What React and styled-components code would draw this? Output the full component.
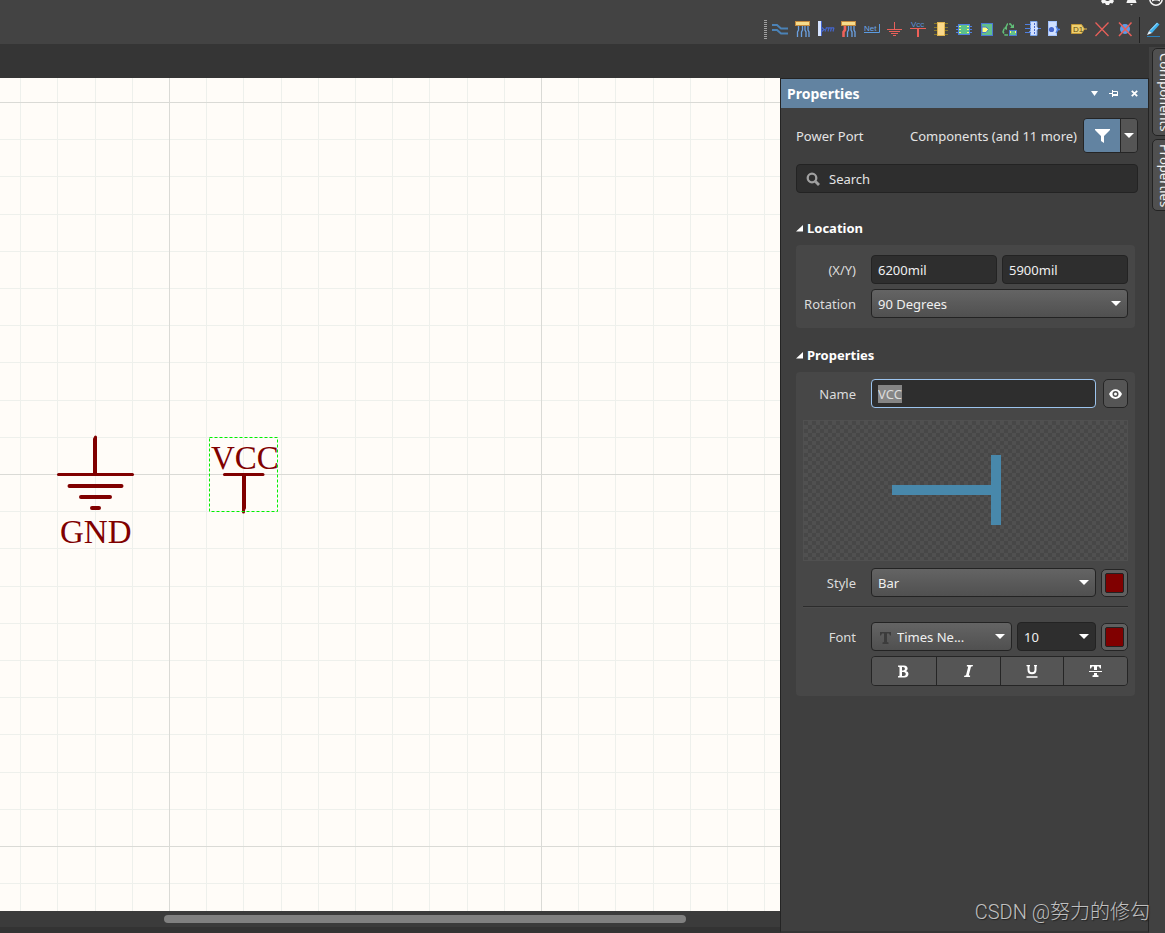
import React, { useEffect, useRef } from "react";
import styled, { createGlobalStyle, css } from "styled-components";

const GlobalStyle = createGlobalStyle`
  *, *::before, *::after { box-sizing: border-box; }
  html, body { margin: 0; padding: 0; background: #353535; }
  body, button, input, select {
    font-family: "Noto Sans", "Open Sans", sans-serif;
    font-size: 13px;
    color: #f0f0f0;
  }
  svg { display: block; flex: none; }
`;

/* ---------- application frame ---------- */

const Frame = styled.div`
  position: relative;
  display: flex;
  flex-direction: column;
  min-height: 100vh;
  overflow: hidden;
`;

const TopBar = styled.header`
  height: 44px;
  background: #434343;
`;

const SystemIcons = styled.div`
  display: flex;
  justify-content: flex-end;
  align-items: flex-end;
  gap: 11px;
  height: 6px;
  padding-right: 2px;
  overflow: hidden;
`;

const SystemButton = styled.button`
  display: block;
  padding: 0;
  border: 0;
  background: none;
`;

const Toolbar = styled.div`
  display: flex;
  justify-content: flex-end;
  align-items: center;
  height: 27px;
  margin-top: 10px;
`;

const Grip = styled.span`
  width: 3px;
  height: 20px;
  margin-right: 2px;
  background: repeating-linear-gradient(#a0a0a0 0 1px, transparent 1px 2px);
`;

const ToolButton = styled.button`
  display: flex;
  justify-content: center;
  width: 23px;
  padding: 5px 0;
  border: 0;
  background: none;
`;

const ToolDivider = styled.span`
  width: 1px;
  height: 26px;
  margin: 0 2px;
  background: #222;
`;

const Body = styled.div`
  display: flex;
  flex: 1;
`;

const Main = styled.main`
  display: flex;
  flex-direction: column;
  flex: 1;
  min-width: 0;
`;

const DocumentStrip = styled.div`
  height: 34px;
  background: #353535;
`;

const Workspace = styled.div`
  display: flex;
  flex: 1;
`;

const Editor = styled.section`
  display: flex;
  flex-direction: column;
  flex: 1;
  min-width: 0;
`;

const Sheet = styled.div`
  position: relative;
  flex: 1;
  background: #fffcf8;
  overflow: hidden;
`;

const SheetDrawing = styled.svg`
  position: absolute;
  left: 0;
  top: 0;
  width: 100%;
  height: 100%;
`;

const ScrollTrack = styled.div`
  height: 16px;
  padding: 4px 0;
  background: #3b3b3b;
`;

const ScrollThumb = styled.div`
  width: 67%;
  height: 8px;
  margin-left: 21%;
  border-radius: 4px;
  background: #808080;
`;

const StatusStrip = styled.div`
  height: 6px;
  background: #333;
`;

/* ---------- properties panel ---------- */

const Panel = styled.aside`
  width: 369px;
  border: 1px solid #242424;
  border-bottom: 2px solid #353535;
  background: #3f3f3f;
`;

const PanelHeader = styled.div`
  display: flex;
  align-items: center;
  height: 29px;
  padding: 0 8px 0 6px;
  background: #6283a1;
`;

const PanelTitle = styled.h1`
  flex: 1;
  margin: 0;
  font-size: 14px;
  line-height: 20px;
  font-weight: 700;
  color: #fff;
`;

const HeaderButton = styled.button`
  display: flex;
  justify-content: center;
  align-items: center;
  width: 20px;
  height: 20px;
  padding: 0;
  border: 0;
  background: none;
  &:last-child { width: 12px; margin-left: 4px; }
`;

const PanelBody = styled.div`
  padding: 10px 10px 0 15px;
`;

const FilterRow = styled.div`
  display: flex;
  align-items: center;
  line-height: 20px;
`;

const ObjectKind = styled.span`
  flex: 1;
  color: #e4e4e4;
`;

const FilterScope = styled.span`
  margin-right: 6px;
  color: #e4e4e4;
`;

const SplitButton = styled.div`
  display: flex;
  height: 35px;
  border: 1px solid #252525;
  border-radius: 4px;
  overflow: hidden;
`;

const SplitPart = styled.button`
  display: flex;
  justify-content: center;
  align-items: center;
  width: ${(p) => (p.$main ? "36px" : "17px")};
  padding: 0;
  border: 0;
  background: ${(p) => (p.$main ? "#6283a1" : "#555")};
  ${(p) => !p.$main && css`border-left: 1px solid #252525;`}
`;

const SearchBox = styled.label`
  display: flex;
  align-items: center;
  gap: 8px;
  height: 29px;
  margin-top: 11px;
  padding: 0 9px;
  border: 1px solid #232323;
  border-radius: 4px;
  background: #2e2e2e;
`;

const SearchInput = styled.input`
  flex: 1;
  min-width: 0;
  padding: 0;
  border: 0;
  outline: 0;
  background: none;
  line-height: 20px;
  &::placeholder { color: #e4e4e4; opacity: 1; }
`;

const SectionTitle = styled.h2`
  display: flex;
  align-items: center;
  gap: 4px;
  height: 20px;
  margin: ${(p) => (p.$first ? "25px" : "17px")} 0 7px;
  font-size: 13px;
  line-height: 20px;
  font-weight: 700;
  color: #fff;
`;

const Group = styled.div`
  display: flex;
  flex-direction: column;
  gap: 5px;
  margin-right: 3px;
  padding: ${(p) => (p.$tight ? "7px" : "10px")} 7px 10px;
  border-radius: 4px;
  background: #474747;
`;

const Field = styled.div`
  display: grid;
  grid-template-columns: 53px 1fr;
  column-gap: 15px;
  align-items: center;
`;

const FieldLabel = styled.label`
  text-align: right;
  line-height: 20px;
  color: #dcdcdc;
`;

const Controls = styled.div`
  display: flex;
  align-items: center;
  gap: ${(p) => (p.$wide ? "7px" : "5px")};
  min-width: 0;
`;

const TextInput = styled.input`
  flex: 1;
  min-width: 0;
  height: 29px;
  padding: 0 6px;
  border: 1px solid ${(p) => (p.$active ? "#9cc4ee" : "#232323")};
  border-radius: 4px;
  outline: 0;
  background: #2e2e2e;
  &::selection { background: #858585; color: #dcdcdc; }
`;

const SelectBox = styled.div`
  position: relative;
  display: flex;
  flex: ${(p) => (p.$narrow ? "0 0 79px" : "1")};
  min-width: 0;
`;

const Select = styled.select`
  appearance: none;
  width: 100%;
  height: 29px;
  padding: 0 24px 0 ${(p) => (p.$icon ? "25px" : "6px")};
  border: 1px solid #232323;
  border-radius: 4px;
  outline: 0;
  background: ${(p) => (p.$dark ? "#2e2e2e" : "linear-gradient(#646464, #505050)")};
`;

const SelectArrow = styled.span`
  position: absolute;
  right: 7px;
  top: 12px;
  pointer-events: none;
`;

const SelectIcon = styled.span`
  position: absolute;
  left: 9px;
  top: 10px;
  pointer-events: none;
`;

const IconButton = styled.button`
  display: flex;
  justify-content: center;
  align-items: center;
  width: 25px;
  height: 29px;
  padding: 0;
  border: 1px solid #252525;
  border-radius: 5px;
  background: #555;
`;

const Swatch = styled.button`
  width: 27px;
  height: 28px;
  padding: 3px;
  border: 1px solid #252525;
  border-radius: 5px;
  background: #606060;
  &::before {
    content: "";
    display: block;
    height: 100%;
    border: 1px solid #222;
    border-radius: 2px;
    background: #800000;
  }
`;

const Preview = styled.div`
  height: 141px;
  margin: 7px 0 2px;
  padding: 34px 0 0 88px;
  border: 1px solid #505050;
  background: repeating-conic-gradient(#505050 0 25%, #474747 0 50%) 0 0 / 8px 8px;
`;

const Rule = styled.hr`
  width: 100%;
  height: 2px;
  margin: 4px 0 9px;
  border: 0;
  border-top: 1px solid #2c2c2c;
  border-bottom: 1px solid #4c4c4c;
`;

const StyleButtons = styled.div`
  display: grid;
  grid-template-columns: repeat(4, 1fr);
  height: 30px;
  margin-left: 68px;
  border: 1px solid #252525;
  border-radius: 4px;
  overflow: hidden;
`;

const StyleButton = styled.button`
  display: flex;
  justify-content: center;
  align-items: center;
  padding: 0;
  border: 0;
  background: #555;
  & + & { border-left: 1px solid #252525; }
`;

/* ---------- right rail ---------- */

const Rail = styled.nav`
  display: flex;
  flex-direction: column;
  gap: 3px;
  width: 16px;
  margin-top: 3px;
  padding: 1px 0 0 3px;
  background: #414141;
  overflow: hidden;
`;

const RailTab = styled.button`
  width: 26px;
  height: ${(p) => p.$length};
  padding: 4px 0 0;
  border: 1px solid #232323;
  border-radius: 5px;
  background: #505050;
  text-align: left;
  line-height: 20px;
  writing-mode: vertical-rl;
  white-space: nowrap;
  overflow: hidden;
`;

const Watermark = styled.div`
  position: absolute;
  right: 15px;
  bottom: 6px;
  font-family: Roboto, "Noto Sans CJK SC", sans-serif;
  font-size: 20px;
  font-weight: 300;
  line-height: 30px;
  color: #c0c0c0;
  text-shadow: 1px 1px 1px #222;
`;

/* ---------- drawings ---------- */

const Caret = ({ w = 10, h = 5 }) => (
  <svg width={w} height={h} viewBox="0 0 10 5" preserveAspectRatio="none"><path d="M0 0H10L5 5Z" fill="#fff" /></svg>
);

const Collapse = () => (
  <svg width="7" height="7" viewBox="0 0 7 7"><path d="M7 0V6.500H0Z" fill="#fff" /></svg>
);

const harnessWires = "M3.500 5V9L2.500 11V16M7.500 5V9L6.500 11V16M10 5V9L11 11V16M13 5V9L14 11V16";

const toolIcons = [
  ["Wire", <g fill="none" stroke="#4b82b6" strokeWidth="2"><path d="M0 4H5L9 7.500H16" /><path d="M0 9H5L9 12.500H16" /></g>],
  ["Bus", <g><path d={harnessWires} fill="none" stroke="#6ba0e0" strokeWidth="1.300" /><rect x=".5" y=".5" width="14" height="4" fill="#f6dc8c" stroke="#c48a3c" /></g>],
  ["Signal harness", <g><rect x="0" y="0" width="3" height="15" fill="#d6e4ff" /><path d="M3.500 0V15" stroke="#4566cc" /><path d="M4 6.500L6 8.500H7M4 10.500L6 8.500M7 10.500L8.500 6.500M10 10.500L11 6.500M12.500 10.500L13.500 6.500M15 10.500L16 6.500M8 6.800H16" fill="none" stroke="#4566cc" strokeWidth="1.200" /></g>],
  ["Harness connector", <g><path d={harnessWires} fill="none" stroke="#6ba0e0" strokeWidth="1.300" /><path d="M4 5V9L2.500 11V16" fill="none" stroke="#f06058" strokeWidth="2.500" /><rect x=".5" y=".5" width="14" height="4" fill="#f6dc8c" stroke="#c48a3c" /></g>],
  ["Net label", <g><text x="0" y="10" fontFamily="Liberation Sans" fontSize="8" fill="#6ba8ea">Net</text><path d="M0 11.500H15.500V3" fill="none" stroke="#5b9be0" /></g>],
  ["Ground port", <path d="M7.500 1V8M0 8.500H15M2 10.500H13M4 12.500H11M6 14.500H9" stroke="#e8605a" fill="none" />],
  ["Power port", <g><text x="1" y="6" fontFamily="Liberation Sans" fontSize="8" fill="#5b92d8">Vcc</text><path d="M0 7.500H16" stroke="#f06058" /><path d="M8 8V16" stroke="#f06058" strokeWidth="2" /></g>],
  ["Part", <g><path d="M1 2.500H15M1 6.500H15M1 9.500H15M1 13.500H15" stroke="#8a7a28" /><rect x="4.500" y="1.500" width="7" height="13" fill="#fbd98a" stroke="#e0b450" /></g>],
  ["Sheet symbol", <g><path d="M0 5.500H16M0 8.500H16M0 11.500H16" stroke="#4f7fe0" /><rect x="2.500" y="3.500" width="11" height="10" fill="#5cc08c" stroke="#4f7fe0" /><path d="M3 5.500H5M3 8.500H5M3 11.500H5M11 5.500H13M11 8.500H13M11 11.500H13" stroke="#ffff70" /></g>],
  ["Sheet entry", <g><rect x="2.500" y="2.500" width="11" height="12" fill="#62bf8c" stroke="#4a78d0" /><path d="M3 6H7L9.500 8.500L7 11.500H3Z" fill="#ffff80" stroke="#4a78d0" /></g>],
  ["Device sheet", <g><path d="M3.500 7L5.500 3H8.500L10.500 6M2 8L1 11L3 14H6" fill="none" stroke="#62bf78" strokeWidth="1.500" strokeDasharray="5 1" /><path d="M8 7H12V3Z" fill="#62bf78" /><path d="M1 7L5 6L5 9Z" fill="#62bf78" /><rect x="7.500" y="9.500" width="7" height="5" fill="#62bf8c" stroke="#4a78d0" /><path d="M8.500 10V12M13.500 10V12" stroke="#ffff70" /></g>],
  ["Harness port", <g><path d="M5.500 0.500H12V6L13.500 7.500L12 9V14.500H5.500V12L4.500 11L5.500 9.500V5Z" fill="#d0e0ff" stroke="#7aa4ea" /><path d="M0 3.500H6M0 7.500H6M0 11.500H6M13 7.500H16" stroke="#4f7fe0" /><path d="M9.500 2V13" stroke="#4566cc" strokeDasharray="2 1" /></g>],
  ["Harness entry", <g><rect x="0.500" y=".5" width="8" height="14" fill="#d0e0ff" stroke="#a4c4ff" /><circle cx="3.500" cy="8.500" r="2.600" fill="#4566cc" /><path d="M8 5L10 8.500L8 12M10 8.500H12" fill="none" stroke="#4f7fe0" strokeWidth="1.500" /></g>],
  ["Port", <g><path d="M.5 3.500H10.500L13.500 8L10.500 12.500H.5Z" fill="#efd070" stroke="#c49a38" /><path d="M13.500 8H16" stroke="#e0b450" /><text x="2" y="11" fontFamily="Liberation Sans" fontSize="8" fill="#604c10">D1</text></g>],
  ["No ERC", <path d="M1.500 1.500L14.500 15M14.500 1.500L1.500 15" stroke="#e8605a" strokeWidth="1.300" />],
  ["Specific no ERC", <g><circle cx="8" cy="8" r="5" fill="#5b9be8" /><path d="M2 1.500L14.500 15M14.500 1.500L2 15" stroke="#e8605a" strokeWidth="1.500" /></g>],
];

const PencilIcon = () => (
  <svg width="17" height="17" viewBox="0 0 17 17">
    <path d="M4 10L12 1.500L14.500 3.500L7 12Z" fill="#3fb2ee" />
    <path d="M5 9.500L12.500 2" stroke="#b4e4ff" />
    <path d="M4 10L7 12L2 14Z" fill="#e4f4ff" />
    <path d="M2 15.500H15" stroke="#2a7fb8" />
  </svg>
);

const GearIcon = () => (
  <svg width="13" height="14" viewBox="0 0 13 14">
    <path d="M5 0H8L8.500 2L10.500 1.500L12.500 4L11.200 5.500V7L13 9L11.500 11.500L9 11L8 13H5L4 11L1.500 11.500L0 9L1.800 7V5.500L.5 4L2.500 1.500L4.500 2Z" fill="#f4f4f4" />
    <circle cx="6.500" cy="6.500" r="2.600" fill="#434343" />
  </svg>
);

const BellIcon = () => (
  <svg width="13" height="14" viewBox="0 0 13 14">
    <path d="M6.500 0C3 0 3 4 3 6C3 8 1.500 9 1.500 11H11.500C11.500 9 10 8 10 6C10 4 10 0 6.500 0ZM5 12H8L6.500 13.500Z" fill="#f4f4f4" />
  </svg>
);

const UserIcon = () => (
  <svg width="14" height="14" viewBox="0 0 14 14">
    <circle cx="7" cy="7" r="6.200" fill="none" stroke="#f4f4f4" strokeWidth="1.500" />
    <path d="M3 9.500C5 8 9 8 11 9.500V8H3Z" fill="#f4f4f4" />
  </svg>
);

const MINOR_STEP = 37.2;
const gridLines = (major, count) =>
  Array.from({ length: count }, (_, i) => i - 10).map((i) => ({
    at: Math.round(major + i * MINOR_STEP),
    major: i % 10 === 0,
  }));

const columns = gridLines(169, 90);
const rows = gridLines(24, 70);

const Schematic = () => (
  <SheetDrawing role="img" aria-label="Schematic sheet">
    {[false, true].map((major) => (
      <g key={String(major)} fill={major ? "#dadad6" : "#eef0ec"}>
        {columns.filter((c) => c.major === major).map((c) => (
          <rect key={`c${c.at}`} x={c.at} y="0" width="1" height="100%" />
        ))}
        {rows.filter((r) => r.major === major).map((r) => (
          <rect key={`r${r.at}`} x="0" y={r.at} width="100%" height="1" />
        ))}
      </g>
    ))}
    <g stroke="#800000" strokeWidth="4" strokeLinecap="round" fill="none">
      <path d="M95 361V396" />
      <path d="M58.500 396.500H132.500" strokeWidth="3" />
      <path d="M69.500 408H121.500M81 419H110M92 430H99" />
      <path d="M95.500 359V362M243.500 430V434" strokeWidth="3" />
      <path d="M224.500 396.500H263" strokeWidth="3" />
      <path d="M244 397V430" />
    </g>
    <g fill="#800000" fontFamily="Liberation Serif" fontSize="33">
      <text x="60" y="465">GND</text>
      <text x="211" y="391">VCC</text>
    </g>
    <rect x="209.500" y="359.500" width="68" height="74" fill="none" stroke="#00f000" strokeDasharray="3 2" />
  </SheetDrawing>
);

const DropDown = ({ id, label, value, narrow, dark, icon }) => (
  <SelectBox $narrow={narrow}>
    <Select id={id} aria-label={label} $dark={dark} $icon={!!icon} defaultValue={value}>
      <option>{value}</option>
    </Select>
    {icon && <SelectIcon>{icon}</SelectIcon>}
    <SelectArrow><Caret /></SelectArrow>
  </SelectBox>
);

const serifT = "M0 0H11V3.500H10L9 1.500H7V10L8.500 10.500V12H2.500V10.500L4 10V1.500H2L1 3.500H0Z";

export default function App() {
  const nameRef = useRef(null);
  useEffect(() => {
    nameRef.current.focus();
    nameRef.current.select();
  }, []);

  return (
    <>
      <GlobalStyle />
      <Frame>
        <TopBar>
          <SystemIcons>
            <SystemButton aria-label="Settings"><GearIcon /></SystemButton>
            <SystemButton aria-label="Notifications"><BellIcon /></SystemButton>
            <SystemButton aria-label="Account"><UserIcon /></SystemButton>
          </SystemIcons>
          <Toolbar>
            <Grip />
            {toolIcons.map(([name, drawing]) => (
              <ToolButton key={name} aria-label={name}>
                <svg width="17" height="17" viewBox="0 0 17 17">{drawing}</svg>
              </ToolButton>
            ))}
            <ToolDivider />
            <ToolButton aria-label="Draw"><PencilIcon /></ToolButton>
          </Toolbar>
        </TopBar>

        <Body>
          <Main>
            <DocumentStrip />
            <Workspace>
              <Editor>
                <Sheet><Schematic /></Sheet>
                <ScrollTrack><ScrollThumb /></ScrollTrack>
                <StatusStrip />
              </Editor>

              <Panel>
                <PanelHeader>
                  <PanelTitle>Properties</PanelTitle>
                  <HeaderButton aria-label="Panel menu"><Caret w={7} h={5} /></HeaderButton>
                  <HeaderButton aria-label="Pin panel">
                    <svg width="10" height="7" viewBox="0 0 10 7">
                      <path d="M0 3.500H3M3.500 0V7M4 1.500H8.500V5M4 4.500H9" fill="none" stroke="#fff" />
                      <path d="M4 4H9V6H4Z" fill="#fff" />
                    </svg>
                  </HeaderButton>
                  <HeaderButton aria-label="Close panel">
                    <svg width="7" height="7" viewBox="0 0 7 7">
                      <path d="M.8 .8L6.200 6.200M6.200 .8L.8 6.200" stroke="#fff" strokeWidth="1.800" />
                    </svg>
                  </HeaderButton>
                </PanelHeader>

                <PanelBody>
                  <FilterRow>
                    <ObjectKind>Power Port</ObjectKind>
                    <FilterScope>Components (and 11 more)</FilterScope>
                    <SplitButton>
                      <SplitPart $main aria-label="Filter">
                        <svg width="15" height="14" viewBox="0 0 15 14">
                          <path d="M0 0H15V1L9 7V14L6 12V7L0 1Z" fill="#fff" />
                        </svg>
                      </SplitPart>
                      <SplitPart aria-label="Filter options"><Caret /></SplitPart>
                    </SplitButton>
                  </FilterRow>

                  <SearchBox>
                    <svg width="15" height="15" viewBox="0 0 15 15" fill="none" stroke="#a0a0a0">
                      <circle cx="6" cy="7" r="4.300" strokeWidth="2.300" />
                      <path d="M9.500 10.500L13 14" strokeWidth="2.800" />
                    </svg>
                    <SearchInput type="text" placeholder="Search" aria-label="Search" />
                  </SearchBox>

                  <SectionTitle $first><Collapse />Location</SectionTitle>
                  <Group>
                    <Field>
                      <FieldLabel htmlFor="pos-x">(X/Y)</FieldLabel>
                      <Controls>
                        <TextInput id="pos-x" defaultValue="6200mil" />
                        <TextInput aria-label="Y" defaultValue="5900mil" />
                      </Controls>
                    </Field>
                    <Field>
                      <FieldLabel htmlFor="rotation">Rotation</FieldLabel>
                      <DropDown id="rotation" value="90 Degrees" />
                    </Field>
                  </Group>

                  <SectionTitle><Collapse />Properties</SectionTitle>
                  <Group $tight>
                    <Field>
                      <FieldLabel htmlFor="name">Name</FieldLabel>
                      <Controls $wide>
                        <TextInput id="name" ref={nameRef} $active defaultValue="VCC" />
                        <IconButton aria-label="Show name">
                          <svg width="13" height="10" viewBox="0 0 13 10">
                            <path d="M0 5C3-1.500 10-1.500 13 5C10 11.500 3 11.500 0 5Z" fill="#fff" />
                            <circle cx="6.500" cy="5" r="3" fill="#505050" />
                            <circle cx="6.500" cy="5" r="1.500" fill="#fff" />
                          </svg>
                        </IconButton>
                      </Controls>
                    </Field>
                    <Preview>
                      <svg width="109" height="70" viewBox="0 0 109 70" fill="#4888ab">
                        <rect x="0" y="30" width="100" height="10" />
                        <rect x="99" y="0" width="10" height="70" />
                      </svg>
                    </Preview>
                    <Field>
                      <FieldLabel htmlFor="style">Style</FieldLabel>
                      <Controls>
                        <DropDown id="style" value="Bar" />
                        <Swatch aria-label="Port colour" />
                      </Controls>
                    </Field>
                    <Rule />
                    <Field>
                      <FieldLabel htmlFor="font">Font</FieldLabel>
                      <Controls>
                        <DropDown
                          id="font"
                          value="Times Ne..."
                          icon={<svg width="12" height="12" viewBox="0 0 12 12"><path d={serifT} fill="#3c3c3c" /></svg>}
                        />
                        <DropDown label="Font size" value="10" narrow dark />
                        <Swatch aria-label="Font colour" />
                      </Controls>
                    </Field>
                    <StyleButtons>
                      <StyleButton aria-label="Bold">
                        <svg width="11" height="13" viewBox="0 0 11 12">
                          <path fillRule="evenodd" fill="#fff" d="M0 0H6C10.500 0 10.500 5 7.800 5.600C12 6.300 11 12 6.500 12H0V10.800L1.500 10.300V1.700L0 1.200ZM4 1.500V5H5C7.500 5 7.500 1.500 5 1.500ZM4 6.500V10.500H5.500C8.500 10.500 8.500 6.500 5.500 6.500Z" />
                        </svg>
                      </StyleButton>
                      <StyleButton aria-label="Italic">
                        <svg width="9" height="12" viewBox="0 0 9 12">
                          <path d="M3 0H9L8.700 1.200L7 1.700L4.800 10.300L6.200 10.800L6 12H0L.3 10.800L2 10.300L4.200 1.700L2.700 1.200Z" fill="#fff" />
                        </svg>
                      </StyleButton>
                      <StyleButton aria-label="Underline">
                        <svg width="12" height="13" viewBox="0 0 12 13" fill="none" stroke="#fff">
                          <path d="M.5 .6H4M8 .6H11" strokeWidth="1.200" />
                          <path d="M2.500 1V5C2.500 9.300 9.500 9.300 9.500 5V1" strokeWidth="2" />
                          <path d="M.5 12H11.500" strokeWidth="1.500" />
                        </svg>
                      </StyleButton>
                      <StyleButton aria-label="Strikethrough">
                        <svg width="13" height="12" viewBox="-1 0 13 12">
                          <path d={serifT} fill="#fff" />
                          <path d="M-1 6.500H12" stroke="#555" strokeWidth="3" />
                          <path d="M-1 6.500H12" stroke="#fff" strokeWidth="1.200" />
                        </svg>
                      </StyleButton>
                    </StyleButtons>
                  </Group>
                </PanelBody>
              </Panel>
            </Workspace>
          </Main>

          <Rail>
            <RailTab $length="88px">Components</RailTab>
            <RailTab $length="72px">Properties</RailTab>
          </Rail>
        </Body>
        <Watermark>CSDN @努力的修勾</Watermark>
      </Frame>
    </>
  );
}
